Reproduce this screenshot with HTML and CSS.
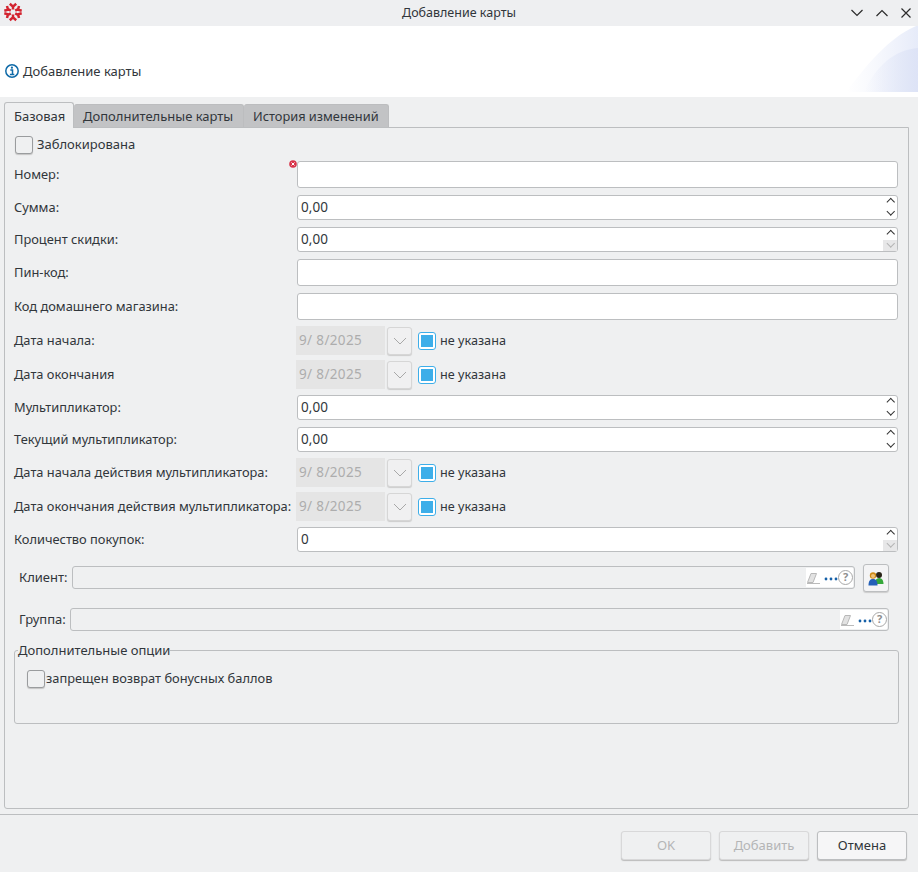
FILE: index.html
```html
<!DOCTYPE html>
<html lang="ru">
<head>
<meta charset="utf-8">
<title>Добавление карты</title>
<link rel="stylesheet" href="styles.css">
</head>
<body>
<div class="window">
  <header class="titlebar">
    <svg class="logo" width="20" height="20" viewBox="0 0 20 20"><g fill="none" stroke="#d3232f" stroke-width="2.5"><path d="M10 7.5V3M6.800 1.800 10 4.600l3.200-2.800"/><path d="M10 12.500V17M6.800 18.200 10 15.400l3.200 2.800"/><path d="M7.800 8.700 3.900 6.500M1.300 8.700 5 7.700 4 4"/><path d="M12.200 8.700 16.100 6.500M18.700 8.700 15 7.700l1-3.700"/><path d="M7.800 11.300 3.900 13.500M1.300 11.300 5 12.300 4 16"/><path d="M12.200 11.300 16.100 13.500M18.700 11.300 15 12.300l1 3.700"/></g></svg>
    <div class="window-title">Добавление карты</div>
    <div class="win-btns">
      <svg width="12" height="8" viewBox="0 0 12 8"><path d="M.5 1 6 6.500 11.500 1" fill="none" stroke="#2b2b2b" stroke-width="1.200"/></svg>
      <svg width="12" height="8" viewBox="0 0 12 8"><path d="M.5 7 6 1.500 11.500 7" fill="none" stroke="#2b2b2b" stroke-width="1.200"/></svg>
      <svg width="10" height="10" viewBox="0 0 10 10"><path d="M.5.500l9 9M9.500.500l-9 9" fill="none" stroke="#2b2b2b" stroke-width="1.200"/></svg>
    </div>
  </header>
  <section class="banner">
    <svg class="info" width="14" height="14" viewBox="0 0 14 14"><circle cx="7" cy="7" r="6.200" fill="#fff" stroke="#0f6aa8" stroke-width="1.500"/><path d="M5.300 6h2.200v4.200M4.900 10.500h4.400" fill="none" stroke="#0f6aa8" stroke-width="1.500"/><circle cx="6.900" cy="3.700" r="1.100" fill="#0f6aa8"/></svg>
    <span>Добавление карты</span>
    <svg class="banner-art" width="72" height="66" viewBox="0 0 72 66">
      <defs>
        <linearGradient id="fadeA" x1="0" x2="1" y1="0" y2="0"><stop offset="0" stop-color="#eef1fb" stop-opacity="0"/><stop offset="1" stop-color="#e6ebf9"/></linearGradient>
        <linearGradient id="fadeB" x1="0" x2="1" y1="0" y2="0"><stop offset="0" stop-color="#e4e9f8" stop-opacity="0"/><stop offset="1" stop-color="#dde3f6"/></linearGradient>
      </defs>
      <path d="M0 66C20 40 42 12 70 0h2v66z" fill="url(#fadeA)"/>
      <path d="M18 66C30 40 48 24 72 22v44z" fill="url(#fadeB)"/>
    </svg>
  </section>
  <nav class="tabs">
    <div class="tab active">Базовая</div>
    <div class="tab">Дополнительные карты</div>
    <div class="tab">История изменений</div>
  </nav>
  <main class="panel">
    <label class="check-row"><span class="check"></span>Заблокирована</label>
    <div class="form">
      <div class="row h27"><span class="lbl">Номер:</span><div class="input"></div><svg class="err" width="8" height="8" viewBox="0 0 8 8"><circle cx="4" cy="4" r="3.800" fill="#d8344a"/><path d="M2.500 2.500l3 3M5.500 2.500l-3 3" stroke="#fff" stroke-width="1"/></svg></div>
      <div class="row h25"><span class="lbl">Сумма:</span><div class="input spin">0,00<span class="arrows"><i class="up"></i><i class="down"></i></span></div></div>
      <div class="row h25"><span class="lbl">Процент скидки:</span><div class="input spin">0,00<span class="arrows"><i class="up"></i><i class="down off"></i></span></div></div>
      <div class="row h27"><span class="lbl">Пин-код:</span><div class="input"></div></div>
      <div class="row h27"><span class="lbl">Код домашнего магазина:</span><div class="input"></div></div>
      <div class="row date-row date-first"><span class="lbl">Дата начала:</span><div class="date">9/ 8/2025</div><span class="drop"><svg width="14" height="8" viewBox="0 0 14 8"><path d="M1 1l6 6 6-6" fill="none" stroke="#a8a8a8"/></svg></span><span class="blue"><b></b></span><span class="unset">не указана</span></div>
      <div class="row date-row"><span class="lbl">Дата окончания</span><div class="date">9/ 8/2025</div><span class="drop"><svg width="14" height="8" viewBox="0 0 14 8"><path d="M1 1l6 6 6-6" fill="none" stroke="#a8a8a8"/></svg></span><span class="blue"><b></b></span><span class="unset">не указана</span></div>
      <div class="row h25 gap-l"><span class="lbl">Мультипликатор:</span><div class="input spin">0,00<span class="arrows"><i class="up"></i><i class="down"></i></span></div></div>
      <div class="row h25"><span class="lbl">Текущий мультипликатор:</span><div class="input spin">0,00<span class="arrows"><i class="up"></i><i class="down"></i></span></div></div>
      <div class="row date-row date-first"><span class="lbl">Дата начала действия мультипликатора:</span><div class="date">9/ 8/2025</div><span class="drop"><svg width="14" height="8" viewBox="0 0 14 8"><path d="M1 1l6 6 6-6" fill="none" stroke="#a8a8a8"/></svg></span><span class="blue"><b></b></span><span class="unset">не указана</span></div>
      <div class="row date-row"><span class="lbl">Дата окончания действия мультипликатора:</span><div class="date">9/ 8/2025</div><span class="drop"><svg width="14" height="8" viewBox="0 0 14 8"><path d="M1 1l6 6 6-6" fill="none" stroke="#a8a8a8"/></svg></span><span class="blue"><b></b></span><span class="unset">не указана</span></div>
      <div class="row h25 gap-l"><span class="lbl">Количество покупок:</span><div class="input spin">0<span class="arrows"><i class="up"></i><i class="down off"></i></span></div></div>
    </div>
    <div class="lookup client">
      <span class="lookup-lbl">Клиент:</span>
      <div class="lookup-field"><span class="tools"><svg width="15" height="14" viewBox="0 0 15 14"><path d="M1.500 11.500 5 2.500h5.500L7 11.500z" fill="#e2e2e2" stroke="#b8b8b8"/><path d="M1 12.500h13" stroke="#bbb"/></svg><svg class="dots" width="14" height="4" viewBox="0 0 14 4"><circle cx="2" cy="2" r="1.400"/><circle cx="7" cy="2" r="1.400"/><circle cx="12" cy="2" r="1.400"/></svg><span class="q">?</span></span></div>
      <button class="people" type="button"><svg width="16" height="15" viewBox="0 0 16 15"><circle cx="11" cy="4" r="3" fill="#2a2418"/><path d="M7 13c0-4 1.500-6 4-6s4.500 2 4.500 6z" fill="#36a83a"/><circle cx="5" cy="4.500" r="3.200" fill="#cf8a14"/><circle cx="5" cy="5" r="2" fill="#eec27a"/><path d="M.5 14.500c0-5 1.800-6.500 4.500-6.500s4.500 1.500 4.500 6.500z" fill="#2460b8"/></svg></button>
    </div>
    <div class="lookup group">
      <span class="lookup-lbl">Группа:</span>
      <div class="lookup-field"><span class="tools"><svg width="15" height="14" viewBox="0 0 15 14"><path d="M1.500 11.500 5 2.500h5.500L7 11.500z" fill="#e2e2e2" stroke="#b8b8b8"/><path d="M1 12.500h13" stroke="#bbb"/></svg><svg class="dots" width="14" height="4" viewBox="0 0 14 4"><circle cx="2" cy="2" r="1.400"/><circle cx="7" cy="2" r="1.400"/><circle cx="12" cy="2" r="1.400"/></svg><span class="q">?</span></span></div>
    </div>
    <fieldset class="options">
      <legend>Дополнительные опции</legend>
      <label class="opt"><span class="check"></span>запрещен возврат бонусных баллов</label>
    </fieldset>
  </main>
  <footer class="footer">
    <button class="btn off" type="button">OK</button>
    <button class="btn off" type="button">Добавить</button>
    <button class="btn" type="button">Отмена</button>
  </footer>
</div>
</body>
</html>
```
FILE: styles.css
```css
* { box-sizing: border-box; }
html, body { margin: 0; height: 100%; }
body { background: #eff0f1; font: 13px/18px "Noto Sans", "Open Sans", sans-serif; color: #31363b; overflow: hidden; }
.window { width: 918px; height: 872px; display: flex; flex-direction: column; }
.titlebar { height: 26px; display: flex; align-items: center; justify-content: center; position: relative; background: #eeeff1; }
.logo { position: absolute; left: 3px; top: 2px; }
.window-title { font-size: 12.500px; }
.win-btns { position: absolute; left: 851px; top: 7px; display: flex; gap: 13px; align-items: center; height: 12px; }
.banner { height: 71px; background: #fff; display: flex; align-items: flex-end; gap: 4px; padding: 0 5px 17px; position: relative; overflow: hidden; }
.banner .info { margin-bottom: 2px; }
.banner-art { position: absolute; right: 0; top: 0; }
.tabs { display: flex; padding: 5px 0 0 4px; height: 30px; position: relative; z-index: 1; }
.tab { height: 23px; margin-top: 2px; padding: 0 9px; background: #c2c3c5; border: 1px solid #bcbdbf; border-bottom: 0; border-left: 0; border-radius: 3px 3px 0 0; line-height: 22px; white-space: nowrap; }
.tab.active { background: #eff0f1; border: 1px solid #bcbec0; border-bottom: 0; margin-top: 0; height: 26px; width: 70px; padding-top: 2px; }
.tab:nth-child(2) { width: 170px; }
.tab:nth-child(3) { width: 145px; font-size: 12.800px; }
.panel { margin: 0 9px 0 4px; height: 682px; border: 1px solid #bcbec0; border-radius: 0 0 3px 3px; padding: 0 0 0 9px; display: flex; flex-direction: column; }
.check-row { display: flex; align-items: flex-start; gap: 4px; height: 18px; line-height: 16px; margin-top: 8px; margin-left: 1px; }
.check { width: 18px; height: 18px; background: #eff0f1; border: 1px solid #9a9c9e; border-radius: 3px; box-shadow: 0 1px 1px #c4c4c4; flex: none; }
.form { display: flex; flex-direction: column; margin-top: 7px; padding-right: 10px; }
.row { display: flex; align-items: center; position: relative; margin-bottom: 7px; }
.h27 { height: 27px; }
.h25 { height: 25px; }
.gap-l { margin-top: 1px; }
.lbl { width: 283px; flex: none; white-space: nowrap; font-size: 12.850px; margin-bottom: 2px; }
.date-row { height: 29px; margin-bottom: 5px; }
.date-first { margin-top: -1px; }
.input { flex: 1; height: 100%; background: #fff; border: 1px solid #bcbec0; border-radius: 3px; padding: 0 3px; font-size: 13.500px; line-height: 23px; position: relative; letter-spacing: .1px; }
.err { position: absolute; left: 275px; top: -1px; }
.arrows { position: absolute; right: 0; top: 0; bottom: 0; width: 14px; display: flex; flex-direction: column; }
.arrows i { flex: 1; position: relative; }
.arrows i::after { content: ""; position: absolute; left: 5px; width: 4.500px; height: 4.500px; border-left: 1.500px solid #333; border-top: 1.500px solid #333; transform: rotate(45deg); top: 3px; }
.arrows i.down::after { transform: rotate(225deg); top: 1px; }
.arrows i.off { background: #e7e7e8; }
.arrows i.off::after { border-color: #b4b4b4; }
.date { width: 89px; height: 29px; margin-left: -1px; background: #e5e5e5; color: #adadad; padding: 0 3px; line-height: 29px; font-size: 13.500px; letter-spacing: .35px; }
.drop { width: 25px; height: 28px; margin-left: 2px; background: #f0f0f1; border: 1px solid #d6d6d6; border-radius: 3px; box-shadow: 0 1px 1px #ccc; display: flex; align-items: center; justify-content: center; }
.blue { width: 18px; height: 18px; margin: 0 4px 0 6px; border: 1px solid #3daee9; border-radius: 3px; padding: 2px; background: #fff; }
.blue b { display: block; width: 100%; height: 100%; background: #3daee9; }
.unset { font-size: 12.650px; margin-bottom: 2px; }
.lookup { display: flex; align-items: flex-start; position: relative; }
.lookup-lbl { flex: none; line-height: 23px; margin-top: 2px; }
.lookup-field { height: 23px; margin-top: 2px; background: #eff0f1; border: 1px solid #bcbec0; border-radius: 3px; flex: 1; position: relative; }
.client { margin: 5px 0 0 5px; height: 28px; padding-right: 19px; }
.client .lookup-lbl { width: 53px; }
.group { margin: 14px 0 0 5px; padding-right: 19px; height: 25px; }
.group .lookup-lbl { width: 51px; }
.tools { position: absolute; right: 1px; top: 1px; height: 19px; width: 47px; background: #fff; display: flex; align-items: center; }
.dots { fill: #1560a8; margin: 2px 0 0 3px; flex: none; }
.q { width: 15px; height: 15px; flex: none; border: 1.500px solid #a8a8a8; border-radius: 50%; color: #8e8e8e; font-size: 11px; font-weight: 700; line-height: 12px; text-align: center; }
.people { margin-left: 8px; width: 26px; height: 28px; background: #f4f4f5; border: 1px solid #bcbec0; border-radius: 3px; padding: 0; display: flex; align-items: center; justify-content: center; box-shadow: 0 1px 1px #ccc; }
.options { margin: 10px 9px 0 0; height: 83px; border: 1px solid #bcbec0; border-radius: 3px; padding: 0; position: relative; min-width: 0; }
.options legend { padding: 0; margin-left: 3px; line-height: 18px; font-size: 13px; }
.opt { display: flex; align-items: flex-start; gap: 1px; margin: 11px 0 0 12px; height: 18px; line-height: 16px; font-size: 12.850px; }
.footer { margin-top: 5px; border-top: 1px solid #bcbec0; height: 58px; display: flex; justify-content: flex-end; gap: 8px; padding: 16px 11px 0 0; }
.btn { width: 90px; height: 29px; font: 13px/18px "Noto Sans", "Open Sans", sans-serif; color: #31363b; background: #f6f6f7; border: 1px solid #bcbec0; border-radius: 3px; box-shadow: 0 1px 1px #bbb; padding: 0 0 2px; }
.btn.off { background: #eff0f1; color: #b4b5b6; border-color: #d8d8d9; }
```
